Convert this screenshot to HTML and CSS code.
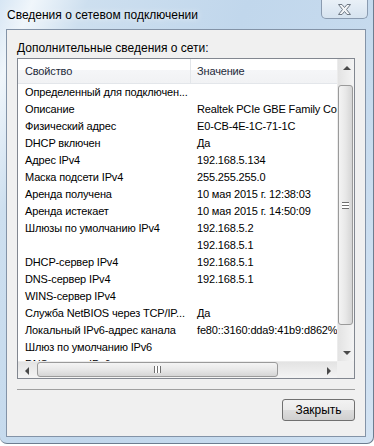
FILE: index.html
```html
<!DOCTYPE html>
<html>
<head>
    <meta charset="utf-8">
    <link rel="stylesheet" href="styles.css">
</head>
<body>

<div class="window">
    <div class="titlebar">
        <span class="title">Сведения о сетевом подключении</span>
        <div class="close_btn">
            <svg width="13" height="11" viewBox="0 0 13 11">
                <polygon points="0.5,0.5 4,0.5 6.5,3.5 9,0.5 12.5,0.5 8.5,5.5 12.5,10.5 9,10.5 6.5,7.5 4,10.5 0.5,10.5 4.5,5.5" fill="#f3f5f7" stroke="#6f7984" stroke-width="1" stroke-linejoin="round"/>
            </svg>
        </div>
    </div>

    <div class="client">
        <div class="group_label">Дополнительные сведения о сети:</div>

        <div class="listview">
            <div class="list_area">
                <div class="list_header">
                    <div class="col col_name">Свойство</div>
                    <div class="col col_value">Значение</div>
                </div>
                <div class="row"><div class="col col_name">Определенный для подключен...</div><div class="col col_value"></div></div>
                <div class="row"><div class="col col_name">Описание</div><div class="col col_value">Realtek PCIe GBE Family Controller</div></div>
                <div class="row"><div class="col col_name">Физический адрес</div><div class="col col_value">E0-CB-4E-1C-71-1C</div></div>
                <div class="row"><div class="col col_name">DHCP включен</div><div class="col col_value">Да</div></div>
                <div class="row"><div class="col col_name">Адрес IPv4</div><div class="col col_value">192.168.5.134</div></div>
                <div class="row"><div class="col col_name">Маска подсети IPv4</div><div class="col col_value">255.255.255.0</div></div>
                <div class="row"><div class="col col_name">Аренда получена</div><div class="col col_value">10 мая 2015 г. 12:38:03</div></div>
                <div class="row"><div class="col col_name">Аренда истекает</div><div class="col col_value">10 мая 2015 г. 14:50:09</div></div>
                <div class="row"><div class="col col_name">Шлюзы по умолчанию IPv4</div><div class="col col_value">192.168.5.2</div></div>
                <div class="row"><div class="col col_name"></div><div class="col col_value">192.168.5.1</div></div>
                <div class="row"><div class="col col_name">DHCP-сервер IPv4</div><div class="col col_value">192.168.5.1</div></div>
                <div class="row"><div class="col col_name">DNS-сервер IPv4</div><div class="col col_value">192.168.5.1</div></div>
                <div class="row"><div class="col col_name">WINS-сервер IPv4</div><div class="col col_value"></div></div>
                <div class="row"><div class="col col_name">Служба NetBIOS через TCP/IP...</div><div class="col col_value">Да</div></div>
                <div class="row"><div class="col col_name">Локальный IPv6-адрес канала</div><div class="col col_value">fe80::3160:dda9:41b9:d862%11</div></div>
                <div class="row"><div class="col col_name">Шлюз по умолчанию IPv6</div><div class="col col_value"></div></div>
                <div class="row"><div class="col col_name">DNS-сервер IPv6</div><div class="col col_value"></div></div>
            </div>

            <div class="vscroll">
                <div class="sb_btn"><span class="arrow arrow_up"></span></div>
                <div class="sb_track">
                    <div class="thumb thumb_v"><span class="grip_v"></span></div>
                </div>
                <div class="sb_btn"><span class="arrow arrow_down"></span></div>
            </div>

            <div class="hscroll">
                <div class="sb_btn"><span class="arrow arrow_left"></span></div>
                <div class="sb_track">
                    <div class="thumb thumb_h"><span class="grip_h"></span></div>
                </div>
                <div class="sb_btn"><span class="arrow arrow_right"></span></div>
            </div>

            <div class="corner"></div>
        </div>

        <div class="separator"></div>

        <div class="buttons">
            <button class="btn">Закрыть</button>
        </div>
    </div>
</div>

</body>
</html>
```

FILE: styles.css
```css
body {
    margin: 0;
    background: #fff;
    font-family: "Liberation Sans", Arial, sans-serif;
}
.window {
    width: 374px;
    height: 444px;
    box-sizing: border-box;
    background: linear-gradient(112deg, #d7e6f4 0%, #f0f6fb 6%, #cddfef 16%, #c1d7ec 45%, #c7dbee 75%, #d3e3f3 100%);
    border-right: 1px solid #6d7d90;
    border-bottom: 1px solid #6d7d90;
    border-radius: 0 0 7px 7px;
}
.titlebar {
    height: 29px;
    display: flex;
    align-items: flex-start;
}
.title {
    font-size: 12px;
    line-height: 16px;
    padding: 7px 0 0 7px;
    color: #000;
    text-shadow: 0 0 6px rgba(255, 255, 255, 0.9);
}
.close_btn {
    margin-left: auto;
    margin-right: 5px;
    width: 47px;
    height: 19px;
    box-sizing: border-box;
    border: 1px solid #8a9bb0;
    border-top: none;
    border-radius: 0 0 5px 5px;
    background: linear-gradient(#e9f0f7, #d6e3ef);
    display: flex;
    align-items: center;
    justify-content: center;
}
.close_btn svg {
    display: block;
    margin-top: 1px;
}
.client {
    margin-left: 6px;
    width: 360px;
    height: 408px;
    box-sizing: border-box;
    background: #f0f0f0;
    border: 1px solid #8393a7;
    padding: 10px 10px 0 10px;
}
.group_label {
    font-size: 12px;
    line-height: 16px;
    height: 16px;
    margin-bottom: 2px;
    color: #000;
}
.listview {
    height: 321px;
    box-sizing: border-box;
    border: 1px solid #828790;
    background: #fff;
    display: grid;
    grid-template-columns: 1fr 17px;
    grid-template-rows: 1fr 17px;
}
.list_area {
    overflow: hidden;
    font-size: 11px;
    letter-spacing: -0.15px;
    color: #000;
}
.list_header, .row {
    display: flex;
    width: 420px;
    white-space: nowrap;
}
.list_header {
    height: 25px;
    line-height: 25px;
    box-sizing: border-box;
    border-bottom: 1px solid #e3e6ea;
    background: linear-gradient(#fff 0%, #fff 45%, #f5f6f8 46%, #f1f2f4 100%);
    color: #1e2a3a;
}
.row {
    height: 17px;
    line-height: 17px;
}
.col {
    overflow: hidden;
}
.col_name {
    width: 173px;
    box-sizing: border-box;
    padding-left: 7px;
}
.list_header .col_name {
    border-right: 1px solid #e3e6ea;
}
.col_value {
    width: 240px;
    padding-left: 6px;
}
.vscroll, .hscroll {
    display: flex;
    background: linear-gradient(to right, #e3e3e3, #f4f4f4);
}
.vscroll {
    flex-direction: column;
    border-left: 1px solid #ececec;
}
.hscroll {
    background: linear-gradient(#e3e3e3, #f4f4f4);
    border-top: 1px solid #ececec;
}
.sb_btn {
    width: 17px;
    height: 17px;
    flex: none;
    display: flex;
    align-items: center;
    justify-content: center;
}
.sb_track {
    flex: 1;
    display: flex;
}
.vscroll .sb_track {
    flex-direction: column;
}
.thumb {
    box-sizing: border-box;
    border: 1px solid #9a9a9a;
    border-radius: 3px;
    display: flex;
    align-items: center;
    justify-content: center;
}
.thumb_v {
    margin: 9px 0 0 0;
    height: 240px;
    width: 15px;
    background: linear-gradient(to right, #f4f4f4, #e8e8e8 50%, #d5d5d5);
}
.thumb_h {
    margin: 0 0 0 2px;
    width: 241px;
    height: 15px;
    background: linear-gradient(#f4f4f4, #e8e8e8 50%, #d5d5d5);
}
.grip_v {
    width: 7px;
    height: 5px;
    border-top: 1px solid #6f6f6f;
    border-bottom: 1px solid #6f6f6f;
    background: linear-gradient(#fff 0, #fff 2px, #6f6f6f 2px, #6f6f6f 3px, #fff 3px);
}
.grip_h {
    width: 5px;
    height: 7px;
    border-left: 1px solid #6f6f6f;
    border-right: 1px solid #6f6f6f;
    background: linear-gradient(to right, #fff 0, #fff 2px, #6f6f6f 2px, #6f6f6f 3px, #fff 3px);
}
.arrow {
    width: 0;
    height: 0;
}
.arrow_up {
    border-left: 4px solid transparent;
    border-right: 4px solid transparent;
    border-bottom: 4px solid #4a4a4a;
}
.arrow_down {
    border-left: 4px solid transparent;
    border-right: 4px solid transparent;
    border-top: 4px solid #4a4a4a;
}
.arrow_left {
    border-top: 4px solid transparent;
    border-bottom: 4px solid transparent;
    border-right: 4px solid #4a4a4a;
}
.arrow_right {
    border-top: 4px solid transparent;
    border-bottom: 4px solid transparent;
    border-left: 4px solid #4a4a4a;
}
.corner {
    background: #f0f0f0;
}
.separator {
    margin-top: 10px;
    border-top: 1px solid #a0a0a0;
}
.buttons {
    display: flex;
    justify-content: flex-end;
    margin-top: 9px;
}
.btn {
    width: 73px;
    height: 22px;
    margin: 0;
    padding: 0;
    border: 1px solid #707070;
    border-radius: 3px;
    background: linear-gradient(#f2f2f2 0%, #ebebeb 48%, #dddddd 52%, #cfcfcf 100%);
    font-family: "Liberation Sans", Arial, sans-serif;
    font-size: 12px;
    color: #000;
}
```
